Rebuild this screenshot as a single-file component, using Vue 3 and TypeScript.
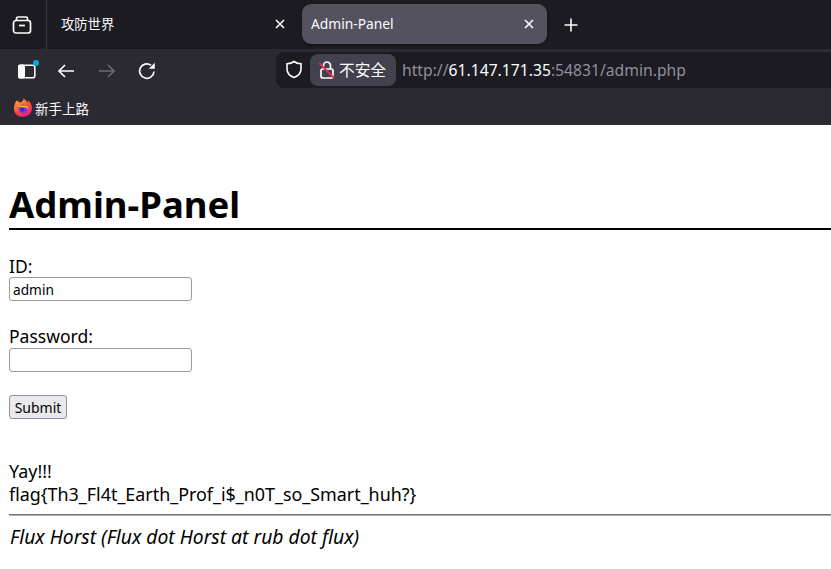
<script setup lang="ts">
const title: string = 'Admin-Panel'
</script>

<template>
  <div class="page">
    <header class="chrome">
      <div class="tabstrip">
        <div class="tabs-btn">
          <svg width="20" height="20" viewBox="0 0 20 20" fill="none" stroke="#fbfbfe" stroke-width="1.7">
            <rect x="1.5" y="5.5" width="17" height="12.5" rx="2.5" />
            <path d="M4.500 5.500V3.600c0-.9.600-1.600 1.500-1.600h8c.9 0 1.500.7 1.500 1.600v1.900" />
            <path d="M7 10.500h6" />
          </svg>
        </div>
        <div class="tab">
          <span class="tab-title">攻防世界</span>
          <svg class="close" width="10" height="10" viewBox="0 0 10 10" stroke="#fbfbfe" stroke-width="1.6"><path d="M1 1l8 8M9 1l-8 8" /></svg>
        </div>
        <div class="tab active">
          <span class="tab-title">{{ title }}</span>
          <svg class="close" width="10" height="10" viewBox="0 0 10 10" stroke="#fbfbfe" stroke-width="1.6"><path d="M1 1l8 8M9 1l-8 8" /></svg>
        </div>
        <svg class="plus" width="16" height="16" viewBox="0 0 16 16" stroke="#fbfbfe" stroke-width="1.6">
          <path d="M8 1.500v13M1.500 8h13" />
        </svg>
      </div>
      <div class="toolbar">
        <div class="sidebar-btn">
          <svg width="20" height="16" viewBox="0 0 20 16" fill="none">
            <rect x="1.800" y="2.300" width="16" height="12.400" rx="2" stroke="#fbfbfe" stroke-width="1.600" />
            <rect x="1" y="1.500" width="7" height="14" rx="1.800" fill="#fbfbfe" />
          </svg>
          <i class="dot"></i>
        </div>
        <svg class="nav back" width="18" height="16" viewBox="0 0 18 16" fill="none" stroke="#fbfbfe" stroke-width="1.700">
          <path d="M17 8H2M8 2 2 8l6 6" />
        </svg>
        <svg class="nav fwd" width="18" height="16" viewBox="0 0 18 16" fill="none" stroke="#6b6a72" stroke-width="1.700">
          <path d="M1 8h15M10 2l6 6-6 6" />
        </svg>
        <svg class="nav reload" width="18" height="18" viewBox="0 0 18 18" fill="none" stroke="#fbfbfe" stroke-width="1.700">
          <path d="M16 9.500A7.200 7.200 0 1 1 13 3.200" />
          <path d="M16.800 .8v6h-6z" fill="#fbfbfe" stroke="none" />
        </svg>
        <div class="urlbar">
          <svg class="shield" width="18" height="19" viewBox="0 0 18 19" fill="none" stroke="#fbfbfe" stroke-width="1.600">
            <path d="M9 1.500c2 1.500 4.500 2.100 7 2.300v5.200c0 4-3 7-7 8.500-4-1.500-7-4.500-7-8.500V3.800C4.500 3.600 7 3 9 1.500z" />
          </svg>
          <div class="insecure">
            <svg width="18" height="20" viewBox="0 0 18 20" fill="none">
              <rect x="3" y="9" width="12" height="9" rx="2" stroke="#fbfbfe" stroke-width="1.700" />
              <path d="M5.500 9V5.500a3.500 3.500 0 0 1 7 0V9" stroke="#fbfbfe" stroke-width="1.700" />
              <path d="M1 3l15 15" stroke="#e2294f" stroke-width="1.800" />
            </svg>
            <span>不安全</span>
          </div>
          <span class="url">http://<b>61.147.171.35</b>:54831/admin.php</span>
        </div>
      </div>
      <div class="bookmarks">
        <svg width="20" height="20" viewBox="0 0 20 20">
          <defs>
            <linearGradient id="fx" x1="0.2" y1="0" x2="0.7" y2="1">
              <stop offset="0" stop-color="#ffb327" />
              <stop offset="0.55" stop-color="#ff4f3b" />
              <stop offset="1" stop-color="#e31587" />
            </linearGradient>
          </defs>
          <path d="M10.500 1.200C10 3 8.500 3.600 7.300 4.600 6.200 4 5.300 3.800 4.600 3.600 4.300 3 4.200 2.500 4.200 2 2.500 3.800 1 6.500 1 10.500 1 15.500 5 19 10 19s9-4 9-8.800c0-3.500-2-6.700-4.300-8 .4 1.200.6 2.200.4 3-.8-1.700-2.600-3-4.600-5z" fill="url(#fx)" />
          <circle cx="10" cy="11" r="4.300" fill="#7b3fc9" />
          <circle cx="9.300" cy="11.500" r="2.300" fill="#4a2aa8" />
          <path d="M5 7.500c2 1 5.500-.5 8 .5 1.500.6 2.500 2 2.600 3.500-1-1.700-3-2.400-5-2.200-2 .2-4.200-.2-5.600-1.800z" fill="#ffc93c" />
        </svg>
        <span>新手上路</span>
      </div>
    </header>
    <main class="content">
      <h1>{{ title }}</h1>
      <form class="login" @submit.prevent>
        <label for="id" class="first">ID:</label>
        <input id="id" type="text" value="admin" />
        <label for="pw" class="second">Password:</label>
        <input id="pw" type="password" />
        <button type="submit">Submit</button>
      </form>
      <p class="result">Yay!!!<br />flag{Th3_Fl4t_Earth_Prof_i$_n0T_so_Smart_huh?}</p>
      <hr />
      <address>Flux Horst (Flux dot Horst at rub dot flux)</address>
    </main>
  </div>
</template>

<style scoped>
.page {
  width: 831px;
  height: 569px;
  overflow: hidden;
  background: #fff;
  font-family: "Noto Sans", "Open Sans", "Noto Sans CJK SC", sans-serif;
  color: #000;
}
.chrome {
  height: 125px;
  background: #2b2a33;
  color: #fbfbfe;
}
.tabstrip {
  height: 49px;
  background: #1c1b22;
  display: flex;
  align-items: flex-start;
}
.tabs-btn {
  width: 47px;
  height: 49px;
  border-right: 1px solid #3a3941;
  box-sizing: border-box;
  display: flex;
  align-items: center;
  justify-content: center;
  padding-right: 3px;
}
.tab {
  width: 255px;
  height: 40px;
  margin-top: 4px;
  border-radius: 9px;
  display: flex;
  align-items: center;
  justify-content: space-between;
  padding: 0 17px 0 14px;
  box-sizing: border-box;
  font-size: 13.300px;
}
.tab.active {
  width: 245px;
  background: #53525e;
  padding: 0 13px 0 9px;
  font-size: 13.800px;
  box-shadow: 0 1px 2px rgba(0, 0, 0, 0.5);
}
.tab-title {
  position: relative;
  top: -1px;
}
.close {
  display: block;
}
.plus {
  margin: 17px 0 0 16px;
}
.toolbar {
  height: 41px;
  display: flex;
  align-items: center;
  padding-left: 17px;
}
.sidebar-btn {
  position: relative;
  width: 20px;
  height: 16px;
  display: flex;
  top: 1px;
}
.dot {
  position: absolute;
  top: -3px;
  right: -2px;
  width: 6px;
  height: 6px;
  border-radius: 50%;
  background: #0fa5e0;
}
.nav {
  position: relative;
  top: 1px;
}
.nav.back {
  margin-left: 20px;
}
.nav.fwd {
  margin-left: 23px;
}
.nav.reload {
  margin-left: 22px;
}
.urlbar {
  margin-left: 120px;
  flex: 1;
  height: 36px;
  background: #1c1b22;
  border-radius: 8px 0 0 8px;
  display: flex;
  align-items: center;
  padding-left: 9px;
}
.insecure {
  margin-left: 7px;
  height: 32px;
  width: 86px;
  background: #42414d;
  border-radius: 8px;
  display: flex;
  align-items: center;
  box-sizing: border-box;
  padding-left: 8px;
  gap: 3px;
  font-size: 15.700px;
  white-space: nowrap;
}
.url {
  margin-left: 6px;
  font-size: 15.700px;
  color: #8f8f9d;
  white-space: nowrap;
}
.url b {
  color: #fbfbfe;
  font-weight: 400;
}
.bookmarks {
  height: 35px;
  display: flex;
  align-items: center;
  padding-left: 13px;
  gap: 2px;
  font-size: 13.500px;
}
.content {
  padding: 0 0 0 9px;
}
h1 {
  margin: 57px 0 0;
  font-size: 36.500px;
  font-weight: 700;
  line-height: 44px;
  padding-bottom: 2px;
  border-bottom: 2px solid #000;
}
.login {
  margin-top: 24px;
  display: flex;
  flex-direction: column;
  align-items: flex-start;
  font-size: 17.500px;
}
label {
  line-height: 23px;
}
.first {
  margin-top: 1px;
  line-height: 22px;
}
.second {
  margin-top: 24px;
}
input {
  width: 183px;
  height: 24px;
  box-sizing: border-box;
  border: 1px solid #9b9b9b;
  border-radius: 3px;
  padding: 0 3px;
  font: inherit;
  font-size: 13.700px;
}
button {
  margin-top: 23px;
  width: 58px;
  height: 24px;
  border: 1px solid #8f8f9d;
  border-radius: 3px;
  background: #e9e9ed;
  font: inherit;
  font-size: 14px;
  padding: 0;
}
.result {
  margin: 41px 0 0;
  font-size: 17.900px;
  line-height: 23px;
}
hr {
  margin: 8px 0 0;
  border: 0;
  border-top: 1px solid #777;
  border-bottom: 1px solid #aaa;
}
address {
  margin-top: 9px;
  padding-left: 1px;
  font-size: 19.300px;
  line-height: 24px;
  font-style: italic;
}
</style>

<style>
body {
  margin: 0;
  background: #fff;
}
</style>
